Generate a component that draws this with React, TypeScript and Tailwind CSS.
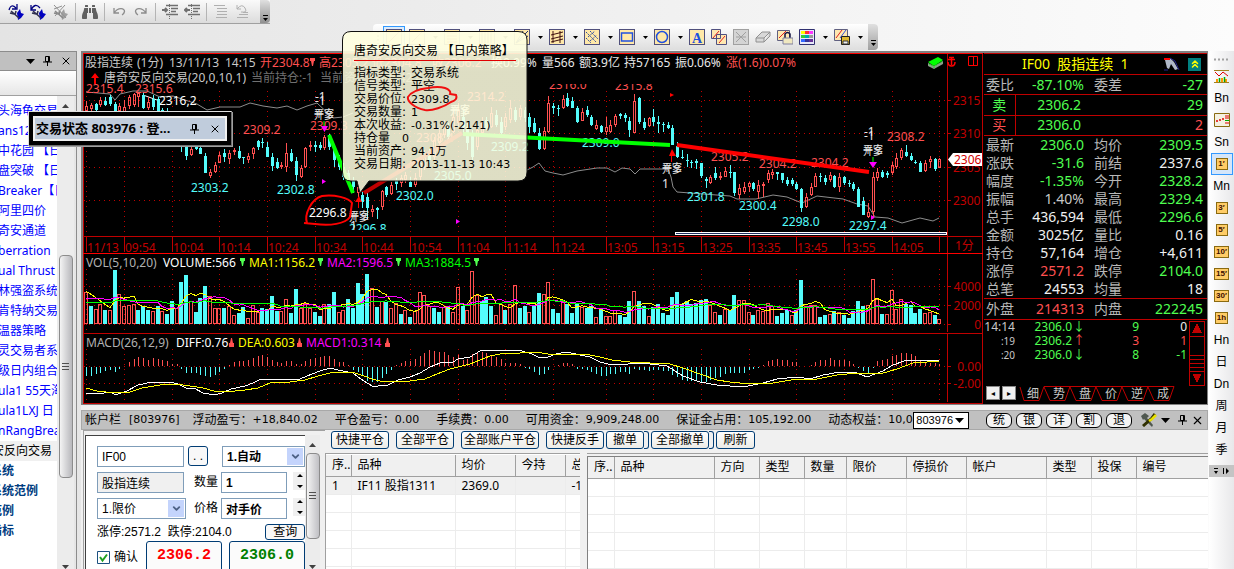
import React from "react";
import { FaBinoculars } from "react-icons/fa";
import { ChevronDown, ChevronsUp, X } from "lucide-react";

const UI = "font-['Noto_Sans','Noto_Sans_CJK_SC',sans-serif]";
const TAHOMA = "font-['DejaVu_Sans','Noto_Sans_CJK_SC',sans-serif]";
const SONG = "font-['Liberation_Sans','Noto_Sans_CJK_SC',sans-serif]";

const RED = "#ff5050";
const CYAN = "#54fcfc";
const DARK = "#c00000";

const barX = (i: number) => Math.round(86 + i * 4.767);

/* One entry per minute: direction, high, body top, body bottom, low (thirds of a pixel). */
const CANDLES = `r,303,318,333,333 r,310,315,328,335 c,308,312,330,335 r,290,300,316,320 c,290,303,315,318 c,284,292,312,318 c,305,311,333,340 r,310,318,333,340 r,300,321,335,340 r,284,290,317,328
r,278,283,316,320 r,275,278,290,322 c,276,286,324,328 r,290,305,325,330 c,284,296,320,330 c,290,298,335,340 c,325,330,345,350 c,325,332,370,380 c,355,365,395,405 c,380,390,415,425
c,400,410,440,455 c,425,440,467,480 r,435,448,466,468 c,425,440,447,450 c,440,445,462,463 c,460,467,519,519 r,508,515,527,535 r,485,495,517,520 r,455,465,490,490 c,448,460,470,485
r,450,460,478,492 r,445,450,455,465 c,438,452,475,477 c,470,472,475,492 r,460,467,480,490 r,442,445,463,476 c,420,424,440,450 c,415,425,430,443 c,425,440,470,470 c,460,470,498,512
c,475,485,503,506 r,485,495,499,508 r,430,460,500,515 c,448,460,482,485 c,470,482,525,542 r,495,505,530,535 r,440,445,500,503 r,424,435,438,452 c,422,434,440,455 c,425,436,443,450
r,405,412,445,450 c,402,405,440,450 c,440,450,480,502 c,465,480,500,510 c,490,500,530,540 c,510,520,545,555 c,530,540,560,580 r,550,562,580,590 c,575,585,605,625 c,575,590,625,657
r,615,628,636,650 c,620,625,630,658 r,570,574,620,630 c,558,562,585,590 r,545,555,583,586 c,535,540,553,570 r,525,535,550,560 r,515,525,540,550 c,530,545,560,562 r,520,535,555,560
r,480,490,530,540 r,450,460,500,510 c,440,455,480,490 r,410,420,470,480 r,385,400,430,445 r,360,375,405,415 c,370,380,410,420 r,330,350,395,400 r,310,330,370,380 c,330,350,380,400
c,370,380,430,450 c,390,400,470,480 r,380,390,440,450 r,350,365,400,410 c,350,360,385,390 r,320,340,380,385 c,330,345,375,380 c,350,365,400,405 r,340,350,380,390 r,300,325,360,370
c,320,330,360,365 r,315,325,350,360 c,320,330,355,365 c,340,350,380,400 c,355,370,395,400 c,385,400,447,450 r,380,393,447,450 r,288,310,395,400 c,310,318,325,343 c,316,323,327,348
r,285,296,325,328 c,278,293,318,322 c,290,303,323,325 c,318,325,365,370 r,325,337,362,364 c,318,330,345,350 c,345,350,375,378 r,360,375,388,390 c,375,377,395,398 r,350,380,395,405
r,360,375,395,398 r,342,348,375,380 c,338,343,349,358 c,340,345,355,365 c,350,362,390,412 r,282,302,398,398 c,290,293,365,372 c,355,367,385,390 r,350,355,378,382 c,328,352,365,378
c,348,365,372,398 c,365,372,375,395 c,367,375,383,388 c,375,383,435,435 c,425,438,470,475 c,450,470,475,478 c,463,480,483,500 c,480,486,490,503 c,478,484,490,508 c,488,490,528,535
c,530,538,542,565 r,525,530,548,552 c,502,518,535,540 r,515,527,533,540 r,502,512,530,532 c,495,515,520,533 c,515,517,578,587 r,552,565,585,597 r,545,560,575,582 r,545,549,560,575
c,545,548,567,572 r,540,555,575,597 r,545,553,557,590 r,510,520,540,550 r,507,515,525,538 c,515,517,522,540 c,518,520,540,548 c,530,540,553,557 c,535,540,553,558 c,545,553,567,570
c,563,566,625,637 r,580,590,620,625 r,550,560,585,588 r,520,527,560,562 c,520,527,530,545 c,525,535,545,555 r,515,525,540,545 c,525,527,562,565 r,520,530,560,577 c,528,532,550,555
c,540,550,553,562 c,545,553,567,572 c,560,568,620,622 c,592,603,645,645 r,610,637,650,655 r,517,530,637,650 r,503,517,533,543 c,510,515,530,535 c,513,520,524,533 r,485,495,520,525
r,460,475,500,508 r,445,450,475,480 c,435,457,467,470 c,458,468,480,483 c,480,485,490,493 c,483,490,515,517 r,480,490,513,515 r,468,478,487,505 c,475,478,507,512 r,475,478,503,505`
  .split(/\s+/)
  .map((s) => {
    const [k, ...v] = s.split(",");
    return { k, v: v.map((n) => Number(n) / 3) };
  });

const VOLUMES = `r187 c228 r238 r221 c240 r240 c120 r193 r229 r226 r222 c240 c228 c240 r243 c228 r243 c252 c213 r235 c156 c135 r213 c246 c204 c168 r199 r235 r235 c234
r228 r256 c249 c231 r265 r226 r247 c234 c237 c198 c243 r244 r208 c249 c177 r235 r219 r235 c247 c258 r223 c222 c186 r247 r241 c207 c234 c159 c192 c132
r175 c231 r214 c216 r235 r220 c252 r241 c261 r244 r187 r196 r229 c234 c246 r232 c231 r247 r172 c228 r241 r124 r196 c213 c201 c228 r256 r223 c240 r223
r166 c234 c228 r247 c228 c189 r193 r157 c237 c249 r214 c222 c249 c219 r232 c234 c228 r262 c237 r259 r259 r241 c255 c261 c213 r184 c213 c228 r259 c231
c222 c249 c255 c201 c186 c222 c213 c222 c219 c210 c207 r226 r247 c255 r238 c240 c195 r211 r211 r247 c255 r241 r244 r220 r228 c258 c249 c240 r256 c240
c150 r229 r226 r226 c261 c255 r253 c243 r247 c255 c264 c243 c213 c228 r226 r148 r208 c252 r253 r181 r238 r208 c222 c225 c249 c237 r250 r247 c255 r268`
  .split(/\s+/)
  .map((s) => ({ k: s[0], h: 282 - Number(s.slice(1)) }));

const MACD = [
  -26, -26, -22, -17, -13, -8, -16, -7, 0, 12, 21, 27, 25, 18, 23, 20, 19, 15, 7, 5, -7, -18, -19, -18, -24, -28, -29,
  -24, -15, -7, 4, 12, 16, 14, 17, 23, 30, 33, 27, 18, 13, 8, 15, 14, 6, 5, 14, 22, 24, 28, 31, 31, 22, 13, 13, 3, -9,
  -15, -27, -43, -46, -45, -32, -22, -10, 3, 9, 16, 16, 22, 31, 40, 47, 46, 42, 41, 32, 28, 33, 18, 22, 35, 42, 42, 40,
  32, 26, 21, 10, 9, 9, 5, -2, -6, -14, -25, -22, -8, 1, 4, 9, 9, 6, -5, -6, -8, -16, -21, -28, -28, -22, -20, -16,
  -14, -20, -6, -8, -10, -11, -9, -10, -11, -12, -23, -31, -38, -41, -41, -40, -48, -44, -38, -34, -31, -22, -18, -18,
  -17, -18, -9, -6, -3, 3, 15, 19, 22, 18, 18, 13, 12, 0, 0, 3, 13, 19, 18, 23, 17, 19, 17, 14, 7, -3, -12, -20, -3,
  14, 18, 22, 29, 34, 40, 40, 35, 31, 19, 12, 10, 9, 6,
];

const HISTORY = [...Array(10).fill(53), ...Array(5).fill(56), ...Array(4).fill(99)] as number[];

function average(period: number) {
  const all = [...HISTORY, ...VOLUMES.map((v) => v.h)];
  return VOLUMES.map((_, i) => {
    const end = i + HISTORY.length + 1;
    const sum = all.slice(end - period, end).reduce((a, b) => a + b, 0);
    return `${barX(i)},${(324 - sum / period / 3).toFixed(1)}`;
  }).join(" ");
}

const TIMES: [number, string][] = [
  [0, "11/13"], [8, "09:54"], [18, "10:04"], [28, "10:14"], [38, "10:24"], [48, "10:34"], [58, "10:44"], [68, "10:54"],
  [78, "11:04"], [88, "11:14"], [98, "11:24"], [109, "13:05"], [119, "13:15"], [129, "13:25"], [139, "13:35"],
  [149, "13:45"], [159, "13:55"], [169, "14:05"], [179, ""],
];

const MARKS: [number, number, string, string][] = [
  [86, 93, "2315.4", RED], [135, 93, "2315.6", RED], [159, 105, "2316,2", "#fff"], [243, 134, "2309.2", RED],
  [310, 130, "2309.3", RED], [467, 101, "2314.2", RED], [416, 142, "2308.4", RED], [549, 89, "2316.0", RED],
  [615, 90, "2315.8", RED], [711, 161, "2305.2", RED], [759, 168, "2304.2", RED], [811, 167, "2304.2", RED],
  [887, 141, "2308.2", RED], [191, 192, "2303.2", CYAN], [277, 194, "2302.8", CYAN], [396, 200, "2302.0", CYAN],
  [434, 180, "2305.0", CYAN], [491, 151, "2309.2", CYAN], [582, 147, "2309.0", CYAN], [687, 201, "2301.8", CYAN],
  [739, 210, "2300.4", CYAN], [782, 226, "2298.0", CYAN], [849, 230, "2297.4", CYAN], [349, 233, "2296.8", CYAN],
  [309, 217, "2296.8", "#fff"],
];

const HEADS: [number, string, string][] = [
  [85, "股指连续", "#c8c8c8"], [137, "(1分)", "#c8c8c8"], [169, "13/11/13", "#c8c8c8"], [225, "14:15", "#c8c8c8"],
  [260, "开2304.8", RED], [319, "高2305.2", RED], [372, "低2304.8", RED], [432, "收2306.2", RED],
  [491, "换0.99%", "#e8e8e8"], [542, "量566", "#e8e8e8"], [579, "额3.9亿", "#e8e8e8"], [624, "持57165", "#e8e8e8"],
  [675, "振0.06%", "#e8e8e8"], [726, "涨(1.6)0.07%", RED],
];

const DIFF =
  "86,393 97,394 111,392 115,395 127,391 138,385 152,382 170,382 178,384 186,388 194,388 203,393 214,395 222,393 231,389 245,386 253,383 261,379 275,379 290,379 300,379 312,374 320,371 330,368 338,370 353,373 358,377 364,381 372,386 378,386 388,385 398,380 410,377 420,373 430,367 440,363 453,362 458,359 470,357 480,351 485,350 500,350 515,350 522,351 532,354 540,358 548,357 556,354 567,352 580,355 590,357 600,362 608,364 628,364 636,363 650,364 667,366 683,376 700,382 717,385 743,387 763,383 777,379 797,377 810,379 823,375 840,372 857,373 867,377 883,371 893,365 907,360 939,360";
const DEA =
  "86,388 97,391 115,393 130,392 142,388 160,385 175,384 190,386 203,388 214,391 225,392 245,390 258,388 270,383 290,382 305,380 318,376 330,373 345,372 355,373 364,376 372,379 380,381 395,382 410,381 425,379 437,374 450,369 470,364 480,360 490,356 505,353 520,353 535,352 555,355 575,354 590,355 600,357 612,360 630,362 650,363 670,364 683,368 700,374 717,380 730,382 750,384 773,383 797,379 817,379 837,375 857,373 880,374 897,369 913,363 927,362 939,361";

function Stacked({ x, y }: { x: number; y: number }) {
  return (
    <g fill="#e8e8e8" fontSize="10">
      <text x={x} y={y}>平空</text>
      <text x={x} y={y + 2}>开多</text>
    </g>
  );
}

function Chart() {
  return (
    <svg viewBox="83 53 900 351" preserveAspectRatio="xMinYMin meet" className={`block h-[351px] min-w-0 flex-1 bg-black text-[12px] ${UI}`} role="img" aria-label="股指连续 1分">
      <clipPath id="labels"><rect x="83" y="84" width="864" height="146" /></clipPath>
      <g shapeRendering="crispEdges" stroke={DARK} fill="none">
        {TIMES.map(([i]) => (
          <path key={i} d={`M${barX(i)}.5 91V236M${barX(i)}.5 269V332M${barX(i)}.5 349V403`} strokeDasharray="1 4" />
        ))}
        {[100, 133, 167, 200, 286, 305, 324, 366, 383].map((y) => (
          <path key={y} d={`M84 ${y}.5H947`} strokeDasharray="1 4" />
        ))}
        {[100, 133, 167, 200, 286, 305, 324, 366, 383].map((y) => <path key={y} d={`M948 ${y}.5h3`} />)}
        {TIMES.map(([i]) => <path key={i} d={`M${barX(i)}.5 236V252`} />)}
        <path d="M83.5 404V53.5H983M83 236.5H983M83 333.5H983M83 403.5H983M947.5 54V332M947.5 334V402M982.5 53V404" />
        <path d="M83 253.5H983M83 53.5H983" stroke="#ff0000" />
      </g>

      {HEADS.map(([x, t, c]) => <text key={x} x={x} y="67" fill={c}>{t}</text>)}
      <path d="M310 58h5v3h-1l-1 5h-1l-1-5h-1z" fill={RED} />
      <path d="M95 73l4 5h-3v6h-2v-6h-3z" fill="#f00" />
      <text x="104" y="82" fill="#c8c8c8">唐奇安反向交易(20,0,10,1)</text>
      <text x="251" y="82" fill="#707070">当前持仓:-1</text>
      <text x="320" y="82" fill="#707070">当前资产:940542.4</text>

      <g fill="none" stroke="#8c8c8c">
        <path d="M86 92L110 94L115 100L120 94L133 91L147 91L160 97L173 96L185 100L197 104L207 110L220 107L240 107L250 103L263 106L277 108L287 106L297 110L307 106L317 103L333 118L343 117L353 113" />
        <path d="M527 170L533 167L539 163L545 171L553 173L563 175L577 171L597 168L607 168L615 172L622 168L630 169L635 174L640 169L668 169L671 177L673 187L677 192L730 196L737 199L756 199L773 195L787 197L802 203L817 196L843 199L857 204L868 206L875 217L888 218L902 223L920 218L933 221L939 218" />
      </g>
      <path d="M143 95L157 100" stroke="#fff" />

      <g shapeRendering="crispEdges">
        {CANDLES.map(({ k, v }, i) => {
          const [h, t, b, l] = v.map(Math.round);
          const x = barX(i);
          const height = Math.max(1, b - t);
          return k === "c" ? (
            <path key={i} d={`M${x} ${h}h1V${t}h1v${height}h-1V${l}h-1V${t + height}h-1V${t}h1z`} fill={CYAN} />
          ) : (
            <path key={i} d={`M${x}.5 ${h}V${t}M${x}.5 ${b}V${l}M${x - 1}.5 ${t}.5h2v${Math.max(1, height - 1)}h-2z`} fill="none" stroke={RED} />
          );
        })}
        {VOLUMES.map(({ k, h }, i) => {
          const x = barX(i) - 2;
          const top = 324 - Math.round(h / 3);
          return k === "c" ? (
            <rect key={i} x={x} y={top} width="4" height={324 - top} fill={CYAN} />
          ) : (
            <rect key={i} x={x + 0.5} y={top + 0.5} width="3" height={323 - top} fill="none" stroke={RED} />
          );
        })}
        {MACD.map((m, i) => {
          const h = Math.round(Math.abs(m) / 3);
          return h ? <rect key={i} x={barX(i)} y={m > 0 ? 366 - h : 367} width="1" height={h} fill={m > 0 ? RED : CYAN} /> : null;
        })}
        <g fill="none">
          <polyline points={average(5)} stroke="#ff0" />
          <polyline points={average(10)} stroke="#f0f" />
          <polyline points={average(20)} stroke="#0f0" />
          <polyline points={DIFF} stroke="#fff" />
          <polyline points={DEA} stroke="#ff0" />
        </g>
      </g>

      <g clipPath="url(#labels)">
        {MARKS.map(([x, y, t, c], i) => <text key={i} x={x} y={y} fill={c}>{t}</text>)}
      </g>
      <g fill="#e8e8e8">
        <text x="315" y="101">-1</text><text x="315" y="105">-1</text>
        <text x="864" y="136">-1</text><text x="864" y="140">-1</text>
        <text x="662" y="188">1</text><text x="350" y="230">1</text>
      </g>
      <Stacked x={314} y={117} />
      <Stacked x={450} y={113} />
      <Stacked x={349} y={219} />
      <Stacked x={863} y={153} />
      <Stacked x={662} y={171} />
      <g fill="none" strokeWidth="4">
        <path d="M329 135L353 193M463 134L670 145" stroke="#0f0" />
        <path d="M677 145L869 172" stroke="#f00" />
        <path d="M364 193L462 133" stroke="#c00000" />
      </g>
      <g fill="#f0f">
        <path d="M321 126h7l-3.500 6zM869 162h8l-4 6zM322 179l4 2.500l-4 2.500zM456 219l4 2.500l-4 2.500zM871 215l4 2.500l-4 2.500z" />
      </g>
      <path d="M355 202h7l-3 -6zM358 202h1v6h-1zM669 156h7l-4-7zM671 156h1v6h-1zM670 93l4 2l-4 2z" fill="#f00" />
      <path d="M324 121v5M873 157v5" stroke="#0f0" />
      <path d="M307 223C304 215 311 199 322 196C334 194 349 198 352 203L350 217C345 224 330 226 315 224L304 223" fill="none" stroke="#f00" strokeWidth="2" />
      <path d="M675 232h272v3H675z" fill="#fff" />
      <path d="M676 233.500h270" stroke="#203060" />

      <path d="M928 62L938 57L943 60L934 66z" fill="#0f0" />
      <path d="M928 63l6 3v3l-6-3zM934 66l9-5v3l-9 5z" fill="#8c9c8c" />
      <path d="M929 64l5 2.500 8-5M934 67v2" stroke="#0f0" strokeDasharray="1 1" fill="none" />
      <path d="M951.500 57v8M948 62q0 4 3.500 4t3.500-4M948 59.500h7M949 57.500h5" stroke="#f00" fill="none" strokeWidth="1.500" />
      <path d="M968.500 56.500h9v9h-9zM973.500 56v10" stroke="#f00" fill="none" />

      <g fill={DARK}>
        {TIMES.map(([i, t]) => <text key={i} x={barX(i) + 1} y="252">{t}</text>)}
        <text x="955" y="250">1分</text>
        <text x="953" y="105">2315</text><text x="953" y="138">2310</text>
        <text x="953" y="172">2305</text><text x="953" y="205">2300</text>
        <g textAnchor="end">
          <text x="981" y="291">4000</text><text x="981" y="310">2000</text><text x="981" y="329">0</text>
          <text x="981" y="371">0.00</text><text x="981" y="388">-2.00</text>
        </g>
      </g>
      <path d="M948 159.500l5-6.500h29v13h-29z" fill="#fff" />
      <text x="954" y="164" fill="#d00000">2306</text>

      <text x="86" y="267" fill="#b0b0b0">VOL(5,10,20)</text>
      <text x="163" y="267" fill="#fff">VOLUME:566</text>
      <text x="249" y="267" fill="#ff0">MA1:1156.2</text>
      <text x="327" y="267" fill="#f0f">MA2:1596.5</text>
      <text x="405" y="267" fill="#0f0">MA3:1884.5</text>
      <path d="M240 258h5v3h-1l-1 5h-1l-1-5h-1zM318 258h5v3h-1l-1 5h-1l-1-5h-1zM396 258h5v3h-1l-1 5h-1l-1-5h-1zM474 258h5v3h-1l-1 5h-1l-1-5h-1z" fill="#50ff50" />
      <text x="86" y="347" fill="#b0b0b0">MACD(26,12,9)</text>
      <text x="176" y="347" fill="#fff">DIFF:0.76</text>
      <text x="238" y="347" fill="#ff0">DEA:0.603</text>
      <text x="306" y="347" fill="#f0f">MACD1:0.314</text>
      <path d="M229 347h5v-4h-1l-1-5h-1l-1 5h-1zM297 347h5v-4h-1l-1-5h-1l-1 5h-1zM385 347h5v-4h-1l-1-5h-1l-1 5h-1z" fill={RED} />
    </svg>
  );
}

const G = "text-[#50ff50]";
const R = "text-[#ff5050]";
const W = "text-[#f0f0f0]";
const QUOTES: [string, string, string, string, string, string][] = [
  ["最新", "2306.0", G, "均价", "2309.5", G],
  ["涨跌", "-31.6", G, "前结", "2337.6", W],
  ["幅度", "-1.35%", G, "今开", "2328.2", G],
  ["振幅", "1.40%", "text-[#c8c8c8]", "最高", "2329.4", G],
  ["总手", "436,594", W, "最低", "2296.6", G],
  ["金额", "3025亿", W, "量比", "0.16", W],
  ["持仓", "57,164", W, "增仓", "+4,611", W],
  ["涨停", "2571.2", R, "跌停", "2104.0", G],
  ["总笔", "24553", W, "均量", "18", W],
];

function QuoteRow({ row, className }: { row: (typeof QUOTES)[number]; className: string }) {
  return (
    <tr className={className}>
      <th className="w-[32px] p-0 pl-0.5 text-left font-normal text-[#b8b8b8]">{row[0]}</th>
      <td className={`w-[68px] p-0 text-right ${row[2]}`}>{row[1]}</td>
      <th className="w-[40px] p-0 pl-2.5 text-left font-normal text-[#b8b8b8]">{row[3]}</th>
      <td className={`p-0 pr-1 text-right ${row[5]}`}>{row[4]}</td>
    </tr>
  );
}

function Quotes() {
  return (
    <section className={`flex w-[223px] shrink-0 flex-col border-t border-[#c00000] bg-black text-[14px] leading-[18px] whitespace-nowrap ${UI}`}>
      <header className="flex h-5 items-center justify-end gap-2 pr-1.5 text-[14px] text-[#ff0]">
        <span className="flex-1 pl-[38px]">IF00&nbsp; 股指连续&nbsp; 1</span>
        <svg width="16" height="14" viewBox="0 0 16 14"><path d="M1 3L6 1L10 5L14 12L11 13L7 7L5 12L3 11z" fill="#b0b8c8" /><path d="M0 1h6v2H0z" fill="#f00" /><path d="M6 1l5 3l4 9M0 13h4" fill="none" stroke="#22228c" /></svg>
        <button className="flex h-[13px] w-[13px] items-center justify-center bg-[#008080]" aria-label="收起"><ChevronsUp size={12} color="#ff0" strokeWidth={3} /></button>
      </header>
      <table className="w-full table-fixed border-collapse">
        <tbody><QuoteRow className="h-5 border-t border-b border-[#c00000]" row={["委比", "-87.10%", G, "委差", "-27", G]} /></tbody>
      </table>
      <table className="w-full table-fixed border-collapse">
        <tbody>
          <tr className="h-5 border-b border-[#c00000]">
            <th className={`w-[31px] border-r border-[#c00000] p-0 font-normal ${G}`}>卖</th>
            <td className={`w-[66px] p-0 text-right ${G}`}>2306.2</td>
            <td className={`p-0 pr-1 text-right ${G}`}>29</td>
          </tr>
          <tr className="h-5 border-b border-[#c00000]">
            <th className={`border-r border-[#c00000] p-0 font-normal ${R}`}>买</th>
            <td className={`p-0 text-right ${G}`}>2306.0</td>
            <td className={`p-0 pr-1 text-right ${R}`}>2</td>
          </tr>
        </tbody>
      </table>
      <table className="w-full table-fixed border-collapse">
        <tbody>
          {QUOTES.map((q) => <QuoteRow key={q[0]} row={q} className="h-[18px]" />)}
          <QuoteRow className="h-[21px] border-t border-b border-[#c00000]" row={["外盘", "214313", R, "内盘", "222245", G]} />
        </tbody>
      </table>
      <div className="flex h-[66px]">
        <table className="h-[42px] flex-1 table-fixed border-collapse text-[12px] leading-[14px]">
          <tbody>
            {[
              ["14:14", "2306.0", "↓", "9", "0", G, W],
              [":19", "2306.2", "↑", "3", "1", R, R],
              [":20", "2306.0", "↓", "8", "-1", G, G],
            ].map((t) => (
              <tr key={t[0]} className="h-[14px]">
                <td className={`w-[31px] p-0 text-right text-[#c8c8c8] ${t[0].length < 4 ? "text-[10px]" : ""}`}>{t[0]}</td>
                <td className={`w-[57px] p-0 text-right ${G}`}>{t[1]}</td>
                <td className={`w-[14px] p-0 text-center ${t[5]}`}>{t[2]}</td>
                <td className={`p-0 text-right ${t[5]}`}>{t[3]}</td>
                <td className={`w-[50px] p-0 pr-0.5 text-right ${t[6]}`}>{t[4]}</td>
              </tr>
            ))}
          </tbody>
        </table>
        <svg width="16" height="66" viewBox="0 0 16 65" className="mr-0.5 shrink-0" shapeRendering="crispEdges">
          <path d="M.5 .5h15v64h-15zM0 15.500h16M0 34.500h16M0 38.500h16M0 42.500h16M0 46.500h16M0 50.500h16" fill="none" stroke={DARK} />
          <path d="M8 3l5 9H3zM8 62l5-9H3z" fill={DARK} />
        </svg>
      </div>
      <div className="flex h-[18px] items-start text-[12px] leading-[15px] text-[#c8c8c8]">
        <div className="flex gap-0.5 pl-0.5">
          <button className="h-[14px] w-[14px] border border-[#888] bg-[#f0f0f0] text-[8px] leading-[10px] text-black">◂</button>
          <button className="h-[14px] w-[14px] border border-[#888] bg-[#f0f0f0] text-[8px] leading-[10px] text-black">▸</button>
        </div>
        {["细", "势", "盘", "价", "逆", "成"].map((t, i) => (
          <button key={t} className="relative h-[15px] w-[26px] pl-2">
            <svg className="absolute inset-0" width="30" height="15" viewBox="0 0 30 15"><path d={`M${i ? 2 : 4} 1L8 14.500H23L28 .5${i ? "H2" : ""}`} fill="none" stroke={DARK} /></svg>
            <span className="relative">{t}</span>
          </button>
        ))}
      </div>
    </section>
  );
}

function Pin() {
  return <svg width="9" height="10" viewBox="0 0 9 10"><path d="M2.500 .5h4v5h-4zM5.500 0v6M0 6h9M4.500 6v4" fill="none" stroke="#000" /></svg>;
}

const STRATEGIES = ["头海龟交易", "ans12头均线", "中花园 【日", "盘突破 【日内", "Breaker【日", "阿里四价", "奇安通道", "berration", "ual Thrust", "林强盗系统", "肯特纳交易", "温器策略", "灵交易者系统", "级日内组合", "ula1 55天海", "ula1LXJ 日", "nRangBreak"];

function Sidebar() {
  return (
    <aside className={`flex w-[77px] shrink-0 flex-col border-t border-r border-[#8c8c8c] text-[12px] ${UI}`}>
      <div className="flex h-[19px] shrink-0 items-center justify-end gap-2 border-b border-[#8c8c8c] bg-[#c0c0c0] pr-1">
        <svg width="9" height="5" viewBox="0 0 9 5"><path d="M0 0h9l-4.500 5z" /></svg>
        <Pin />
        <X size={12} strokeWidth={2} />
      </div>
      <div className="h-[25px] shrink-0 border-b border-[#a0a0a0] bg-gradient-to-b from-white to-[#e6e6e6]" />
      <div className="flex min-h-0 flex-1">
        <ul className="h-full w-[57px] overflow-hidden bg-white pt-[5px] leading-5 whitespace-nowrap text-[#0000ff]">
          {STRATEGIES.map((s) => <li key={s} className="-ml-0.5 h-5">{s}</li>)}
          <li className="h-5 bg-[#f0f0f0] text-black"><span className="-ml-2">安反向交易</span></li>
          {["系统", "系统范例", "范例", "指标"].map((s) => <li key={s} className="-ml-2.5 h-5 font-bold text-[#003c80]">{s}</li>)}
        </ul>
        <div className="flex w-[17px] flex-col items-center bg-[#ececec] py-2">
          <svg width="7" height="4" viewBox="0 0 7 4"><path d="M0 4h7L3.500 0z" fill="#404040" /></svg>
          <div className="mt-[147px] flex h-[223px] w-[14px] shrink-0 items-center justify-center rounded-sm border border-[#8c8c8c] bg-gradient-to-r from-[#f4f4f4] to-[#b8b8bc]">
            <svg width="7" height="8" viewBox="0 0 7 8"><path d="M0 .5h7M0 3.500h7M0 6.500h7" stroke="#505050" /></svg>
          </div>
          <svg className="mt-auto -mb-2" width="7" height="4" viewBox="0 0 7 4"><path d="M0 0h7L3.500 4z" fill="#404040" /></svg>
        </div>
      </div>
    </aside>
  );
}

function Lines({ dir, tone }: { dir: "in" | "out" | "none" | "undo"; tone: string }) {
  return (
    <svg width="16" height="15" viewBox="0 0 16 15" fill="none" stroke={tone}>
      {(dir === "in" || dir === "out") && (
        <>
          <path d="M4 1.500h12M9 4.500h7M9 7.500h5M4 10.500h12" strokeWidth="1.500" />
          <path d="M7.500 0v15" strokeDasharray="1 1" />
        </>
      )}
      {dir === "none" && <path d="M1 1.500h11M4 4.500h10M4 7.500h10M4 10.500h10M3 13.500h11" />}
      {dir === "undo" && <path d="M2 1v4h4M2 5q5-6 8-1t-4 4M8 8.500h5M4 10.500h9M2 13.500h11" />}
      {dir === "in" && <path d="M0 6h5M3 4l2 2-2 2" strokeWidth="2" />}
      {dir === "out" && <path d="M1 6h5M3 4L1 6l2 2" strokeWidth="2" />}
    </svg>
  );
}

function CurveArrow({ flip }: { flip?: boolean }) {
  return (
    <svg width="13" height="9" viewBox="0 0 13 9">
      <path d={flip ? "M12 1v5H7M12 6C8 0 1 1 1.500 4.500Q2 7 4 8" : "M1 1v5h5M1 6C5 0 12 1 11.500 4.500Q11 7 9 8"} fill="none" stroke="#8c8c8c" strokeWidth="1.300" />
    </svg>
  );
}

function FlagIcon({ off, back }: { off?: boolean; back?: boolean }) {
  const c = off ? "#a0a0a0" : "#0000c0";
  return (
    <svg width="17" height="16" viewBox="0 0 17 16">
      {!off && <path d={back ? "M1 1v5h5M1 6Q5-2 10 4" : "M1 6Q3-1 8 4M9 0v5H4"} fill="none" stroke="#000080" strokeWidth="1.300" />}
      <path d="M9 9l3-4 1 4 3 1-3 4-3 2z" fill={c} />
      <path d="M3 7l8 7M8 7l-1 4M2 9l4 1" stroke={off ? "#888" : "#303050"} strokeWidth="1.500" />
      {off && <path d="M2 1l12 13M13 1L3 12M2 5l8-3" stroke="#909090" />}
    </svg>
  );
}

function MainToolbar() {
  const sep = <i className="h-[18px] w-px bg-[#b4b4b4]" />;
  return (
    <div className="flex h-6 w-[270px] items-center gap-1.5 border-b border-[#a0a0a0] bg-gradient-to-b from-[#fafafa] to-[#dcdcdc]">
      <button className="ml-2" aria-label="前进"><FlagIcon /></button>
      <button aria-label="后退" className="-ml-px"><FlagIcon back /></button>
      <button aria-label="停止" className="-ml-px"><FlagIcon off /></button>
      {sep}
      <button aria-label="查找"><FaBinoculars size={16} color="#606060" /></button>
      {sep}
      <button aria-label="撤销" className="ml-0.5"><CurveArrow /></button>
      <button aria-label="重做" className="ml-0.5"><CurveArrow flip /></button>
      <i className="ml-0.5 h-[18px] w-px bg-[#b4b4b4]" />
      <button aria-label="缩进"><Lines dir="in" tone="#707070" /></button>
      <button aria-label="减少缩进"><Lines dir="out" tone="#707070" /></button>
      {sep}
      <button aria-label="注释"><Lines dir="none" tone="#b0b0b0" /></button>
      <button aria-label="取消注释"><Lines dir="undo" tone="#b0b0b0" /></button>
      <button aria-label="更多" className="ml-auto flex h-full w-2.5 items-end justify-center rounded-r bg-gradient-to-b from-[#e0e0e0] to-[#909090] pb-0.5"><svg width="5" height="6" viewBox="0 0 5 6"><path d="M0 .5h5" stroke="#000" /><path d="M0 3h5L2.500 6z" /></svg></button>
    </div>
  );
}

const ART: Record<string, React.ReactNode> = {
  line: <path d="M3 13L13 3" stroke="#c03030" />,
  rows: <path d="M3 4h10M3 7h10M3 10h10M3 13h10" stroke="#c03030" />,
  cols: <path d="M3 2v12M6 2v12M9 2v12M12 2v12" stroke="#404040" />,
  fan: <path d="M2 14L14 2M2 14L14 7M2 14L9 2" stroke="#203070" />,
  fork: <path d="M4 2v12M11 2v12M2 6l12-3M2 10l12-3M2 13l12-3" stroke="#401010" fill="none" />,
  hatch: <path d="M2 3l10 10M6 2l8 8M2 9l5 5M4 8l7-6M6 12l7-6" stroke="#3050a0" strokeDasharray="2 1" fill="none" />,
  rect: <rect x="2.500" y="4" width="11" height="8" stroke="#2050e0" strokeWidth="1.500" fill="none" />,
  circle: <circle cx="8" cy="8" r="5.500" stroke="#2050e0" strokeWidth="1.500" fill="none" />,
  text: <text x="8" y="13.500" textAnchor="middle" fontSize="14" fontWeight="bold" fill="#2050e0" fontFamily="Liberation Serif">A</text>,
};

function Tool({ art, gray }: { art: string; gray?: boolean }) {
  if (art === "copy")
    return <svg width="16" height="16" viewBox="0 0 16 16"><path d="M.5 .5h9v9h-9zM5.500 5.500h10v10h-10z" fill="#ffe8b0" stroke="#505080" /><path d="M2 9l6-7M8 14l6-7" stroke="#e02020" /></svg>;
  if (art === "eraser")
    return <svg width="16" height="16" viewBox="0 0 16 16"><path d="M1 9l6-6h8l-6 6zM1 9v4h8V9M9 13l6-6V3" fill="#d8d8d8" stroke="#909090" /></svg>;
  if (art === "lock")
    return <svg width="16" height="16" viewBox="0 0 16 16"><path d="M.5 1.500h12v10H.5z" fill="#ffe8b0" stroke="#606080" /><path d="M2 9l7-7" stroke="#e02020" /><path d="M8 9V5q2.500-3 5 0v4" fill="none" stroke="#101040" strokeWidth="1.500" /><path d="M6 9h10v6H6z" fill="#f0e8c0" stroke="#8080a0" /></svg>;
  if (art === "save")
    return <svg width="16" height="16" viewBox="0 0 16 16"><path d="M.5 .5h13v11H.5z" fill="#ffe8b0" stroke="#606080" /><path d="M2 9l6-8" stroke="#e02020" /><path d="M6 9l6-8" stroke="#3050e0" /><path d="M7.500 7.500h8v8h-8z" fill="#e0b830" stroke="#202020" /><path d="M9 12h5v3H9z" fill="#eee" stroke="#333" /></svg>;
  if (art === "palette")
    return (
      <svg width="16" height="16" viewBox="0 0 16 16"><path d="M.5 .5h15v15H.5z" fill="#e8e8f8" stroke="#303070" />
        {["#ff0", "#f33", "#f3f", "#3c3", "#0aa", "#999", "#36f", "#339", "#639"].map((c, i) => <rect key={c} x={2 + (i % 3) * 4} y={2 + Math.floor(i / 3) * 4} width="4" height="3" fill={c} />)}
      </svg>
    );
  return (
    <svg width="16" height="16" viewBox="0 0 16 16">
      <rect x=".5" y=".5" width="15" height="15" fill={gray ? "#d4d4d4" : "#ffe8a8"} stroke={gray ? "#a0a0a0" : "#50507c"} />
      {gray ? <path d="M3 3l10 10M13 3L3 13M3 8h10" stroke="#a0a0a0" /> : ART[art]}
    </svg>
  );
}

function DrawingToolbar() {
  const tools: [string, boolean][] = [["line", true], ["rows", true], ["cols", true], ["fan", true], ["fork", true], ["hatch", true], ["rect", true], ["circle", true], ["text", false], ["copy", false], ["none", false], ["eraser", false], ["lock", false], ["palette", true], ["save", true]];
  return (
    <div className="ml-[373px] flex h-[26px] w-[505px] items-center rounded bg-gradient-to-b from-white to-[#dedede]">
      <svg className="ml-1" width="2" height="14" viewBox="0 0 2 14"><path d="M1 1v13" stroke="#888" strokeWidth="2" strokeDasharray="2 2" /></svg>
      <span className="ml-1 flex h-[22px] w-[22px] items-center justify-center border border-[#3399ff] bg-[#dcebfa]"><Tool art="line" /></span>
      <div className="ml-1 flex items-center gap-1.5">
        {tools.map(([t, menu], i) => (
          <button key={i} className="flex items-center" aria-label={t}>
            <Tool art={t} gray={t === "none"} />
            {menu && <svg className="ml-2" width="5" height="3" viewBox="0 0 5 3"><path d="M0 0h5L2.500 3z" /></svg>}
          </button>
        ))}
      </div>
      <button aria-label="更多" className="ml-auto flex h-full w-2.5 items-end justify-center rounded-r bg-gradient-to-b from-[#e0e0e0] to-[#a0a0a0] pb-1"><svg width="5" height="6" viewBox="0 0 5 6"><path d="M0 .5h5" stroke="#000" /><path d="M0 3h5L2.500 6z" /></svg></button>
    </div>
  );
}

function PeriodBar() {
  const items = ["chart", "Bn", "curve", "Sn", "1′", "Mn", "3′", "5′", "10′", "15′", "30′", "1h", "Hn", "日", "Dn", "周", "月", "季"];
  return (
    <nav className={`ml-px flex w-[25px] shrink-0 flex-col items-center bg-gradient-to-r from-white to-[#e8e8ea] text-[12px] ${SONG}`}>
      <svg className="mt-[7px] mb-1 shrink-0" width="15" height="3" viewBox="0 0 15 3"><path d="M0 1.500h15" stroke="#a0a0a0" strokeWidth="2" strokeDasharray="2 2" /></svg>
      {items.map((t) => (
        <button key={t} className={`flex h-[22px] w-[22px] shrink-0 items-center justify-center ${t === "1′" ? "border border-[#3399ff] bg-[#d4e6fa]" : ""}`}>
          {t === "chart" ? (
            <svg width="15" height="13" viewBox="0 0 15 13"><path d="M0 .5h15M0 12.500h15" stroke="#a08020" /><path d="M1 2l4 4 4-4 5 4" fill="none" stroke="#e00000" /><path d="M3 12V9M8 12V8M12 12V9" stroke="#f90" strokeWidth="2" /><path d="M5.500 12V8M10.500 12V7" stroke="#0a0" strokeWidth="1.500" /></svg>
          ) : t === "curve" ? (
            <svg width="16" height="14" viewBox="0 0 16 14"><path d="M.5 .5h15v13H.5z" fill="#f4f0e0" stroke="#8a6a10" /><path d="M2 8h2M5 7h2M8 6h2" stroke="#e00000" strokeWidth="1.500" /><path d="M11 3h4M11 5h4M11 10h4" stroke="#e00000" /><path d="M11 7.500h4" stroke="#0a0" /></svg>
          ) : /^\d/.test(t) ? (
            <span className="flex h-3 min-w-3 items-center justify-center border border-[#8a6a10] bg-[#ffcc66] px-px text-[8px] leading-none font-bold text-[#401000]">{t}</span>
          ) : t}
        </button>
      ))}
      <div className="mt-1 flex h-3 w-full shrink-0 items-center justify-center bg-[#c4c4c4]"><svg width="16" height="7" viewBox="0 0 16 7"><path d="M0 0h4v1H0zM0 3h4L2 6zM9 0h1v6h-1zM12 0l3 3-3 3z" /></svg></div>
    </nav>
  );
}

function AccountBar() {
  const pairs = [["浮动盈亏：", "+18,840.02"], ["平仓盈亏：", "0.00"], ["手续费：", "0.00"], ["可用资金：", "9,909,248.00"], ["保证金占用：", "105,192.00"]];
  return (
    <div className={`flex h-5 shrink-0 items-center border border-[#a8a8a8] bg-[#c0c0c0] pr-[3px] pl-[3px] text-[12px] whitespace-nowrap ${TAHOMA}`}>
      <span>帐户栏</span>
      <span className="mr-[13px] ml-2 text-[11px]">[803976]</span>
      {pairs.map(([k, v]) => <span key={k} className="mr-[17px] flex items-center">{k}<b className="text-[11px] font-normal">{v}</b></span>)}
      <span className="flex items-center">动态权益：<b className="w-[25px] overflow-hidden text-[11px] font-normal">10,014</b></span>
      <label className={`relative flex h-[17px] w-14 items-center border border-black bg-white ${SONG}`}>
        <select aria-label="帐户" className="w-full appearance-none pl-0.5 text-[11px] leading-4 outline-none"><option>803976</option></select>
        <svg className="pointer-events-none absolute right-1" width="9" height="5" viewBox="0 0 9 5"><path d="M0 0h9l-4.500 5z" /></svg>
      </label>
      <div className="ml-auto flex items-center gap-1">
        {["统", "银", "详", "割", "退"].map((t) => <button key={t} className="h-[15px] w-[26px] rounded-[6px] border border-black bg-[#f4f4f4] text-[12px] leading-[13px]">{t}</button>)}
        <button className="ml-1 flex" aria-label="设置"><svg width="17" height="14" viewBox="0 0 17 14"><path d="M1 3l4-3 4 3-2 2 6 7-1 2-8-8-1 1z" fill="#505850" /><path d="M15 1l-3 4-9 8" stroke="#303000" strokeWidth="3" fill="none" /><path d="M16 2l-4 4-3 2" stroke="#e8e000" strokeWidth="2.500" fill="none" /></svg></button>
        <svg width="9" height="5" viewBox="0 0 9 5"><path d="M0 0h9l-4.500 5z" /></svg>
        <span className="ml-1"><Pin /></span>
        <X size={13} />
      </div>
    </div>
  );
}

function Combo({ value, className, label }: { value: string; className: string; label: string }) {
  return (
    <span className={`relative flex h-[21px] shrink-0 items-center border border-[#7f9db9] bg-white ${className}`}>
      <select aria-label={label} className="w-full appearance-none pl-1 outline-none"><option>{value}</option></select>
      <i className="pointer-events-none absolute right-px flex h-[17px] w-4 items-center justify-center bg-[#c4d4fc]"><ChevronDown size={11} strokeWidth={4} color="#4d6185" /></i>
    </span>
  );
}

function Spinner() {
  return <span className="ml-1.5 flex h-[18px] w-3 shrink-0 items-center bg-[#f0f0f0] pl-1"><svg width="6" height="14" viewBox="0 0 6 14"><path d="M0 3h6L3 0zM0 11h6L3 14z" /></svg></span>;
}

function OrderForm() {
  const field = "h-[21px] border border-[#7f9db9] px-1 outline-none";
  return (
    <div className={`flex w-[242px] shrink-0 border-t border-l border-[#a0a0a0] pt-1 pl-px text-[12px] whitespace-nowrap ${SONG}`}>
      <form className="w-[220px] overflow-hidden border-t border-l border-[#404040] bg-white pt-2.5 pl-[11px]">
        <div className="flex h-[26px]">
          <input aria-label="合约" className={`${field} w-[87px]`} defaultValue="IF00" />
          <button type="button" className="ml-1 h-5 w-[22px] rounded-[3px] border border-[#003c74] bg-[#f8f8f8] leading-4">. .</button>
          <Combo label="开平" className="ml-3.5 w-[83px] font-bold" value="1.自动" />
        </div>
        <div className="flex h-[26px] items-start">
          <input aria-label="名称" readOnly className={`${field} w-[87px] bg-[#f0f0f0]`} defaultValue="股指连续" />
          <label htmlFor="qty" className="ml-2.5 w-[29px] leading-[21px]">数量</label>
          <input id="qty" className={`${field} w-[66px] font-bold`} defaultValue="1" />
          <Spinner />
        </div>
        <div className="flex h-6 items-start">
          <Combo label="价格方式" className="w-[89px]" value="1.限价" />
          <label htmlFor="price" className="ml-2 w-[29px] leading-[21px]">价格</label>
          <input id="price" className={`${field} w-[66px] font-bold`} defaultValue="对手价" />
          <Spinner />
        </div>
        <div className="flex h-[19px] items-center">
          <span className="w-[170px]">涨停:2571.2&nbsp; 跌停:2104.0</span>
          <button type="button" className="h-4 w-10 rounded-[3px] border border-[#003c74] bg-[#f8f8f8] leading-[14px]">查询</button>
        </div>
        <div className="flex">
          <div className="w-[50px] pt-1.5">
            <label className="flex h-5 items-center gap-1">
              <input type="checkbox" defaultChecked className="peer sr-only" />
              <svg width="13" height="13" viewBox="0 0 13 13"><path d="M.5 .5h12v12H.5z" fill="#fff" stroke="#1c5180" /><path d="M3 6l2.500 3.500L10 3.500" fill="none" stroke="#21a121" strokeWidth="2" /></svg>
              确认
            </label>
            <label className="flex h-5 items-center gap-1">
              <input type="checkbox" className="sr-only" />
              <svg width="13" height="13" viewBox="0 0 13 13"><path d="M.5 .5h12v12H.5z" fill="#fff" stroke="#1c5180" /></svg>
              很停
            </label>
          </div>
          <button type="button" className="h-[34px] w-[76px] shrink-0 rounded-[3px] border border-[#003c74] bg-[#fbfbfb] pb-1 font-['Liberation_Mono',monospace] text-[15px] font-bold text-[#ff0000]">2306.2</button>
          <button type="button" className="ml-[7px] h-[34px] w-[76px] shrink-0 rounded-[3px] border border-[#003c74] bg-[#fbfbfb] pb-1 font-['Liberation_Mono',monospace] text-[15px] font-bold text-[#008000]">2306.0</button>
        </div>
      </form>
      <div className="flex w-[15px] flex-col items-center bg-[#ececec] pt-2">
        <svg className="shrink-0" width="7" height="4" viewBox="0 0 7 4"><path d="M0 4h7L3.500 0z" fill="#404040" /></svg>
        <div className="mt-1.5 flex h-[86px] w-[14px] shrink-0 items-center justify-center rounded-sm border border-[#8c8c8c] bg-gradient-to-r from-[#f4f4f4] to-[#c0c0c4]">
          <svg width="7" height="8" viewBox="0 0 7 8"><path d="M0 .5h7M0 3.500h7M0 6.500h7" stroke="#505050" /></svg>
        </div>
        <svg className="mt-auto shrink-0" width="7" height="4" viewBox="0 0 7 4"><path d="M0 0h7L3.500 4z" fill="#404040" /></svg>
      </div>
    </div>
  );
}

function Grid({ cols, first, headH }: { cols: [string, string][]; first?: string[]; headH: string }) {
  const rows = [0, 1, 2, 3, 4, 5];
  return (
    <table className="w-full table-fixed border-collapse whitespace-nowrap">
      <thead>
        <tr className={`border-b border-[#a0a0a0] bg-[#f0f0f0] ${headH}`}>
          {cols.map(([name, w], i) => <th key={i} className={`${w} overflow-hidden border-r border-[#a0a0a0] p-0 pl-1.5 text-left font-normal last:border-r-0`}>{name}</th>)}
        </tr>
      </thead>
      <tbody>
        {rows.map((r) => (
          <tr key={r} className={`h-[18px] leading-[17px] border-b border-[#ececec] ${first && r === 0 ? "bg-[#f0f0f0]" : ""}`}>
            {cols.map((_, i) => <td key={i} className="overflow-hidden border-r border-[#ececec] p-0 pl-1.5 last:border-r-0">{first && r === 0 ? first[i] : ""}</td>)}
          </tr>
        ))}
      </tbody>
    </table>
  );
}

function OrderArea() {
  const btn = "h-[18px] rounded-[3px] border border-[#003c74] bg-gradient-to-b from-white to-[#ecebe6] px-1 leading-4";
  return (
    <div className={`flex min-w-0 flex-1 flex-col text-[12px] ${UI}`}>
      <div className={`flex h-[23px] shrink-0 items-start pt-px pl-1.5 whitespace-nowrap ${SONG}`}>
        <button className={`${btn} mr-[7px]`}>快捷平仓</button>
        <button className={`${btn} mr-[7px]`}>全部平仓</button>
        <button className={`${btn} mr-[7px] px-[2px]`}>全部账户平仓</button>
        <button className={`${btn} mr-0.5`}>快捷反手</button>
        <button className={`${btn} w-[38px]`}>撤单</button>
        <i className="mr-0.5 h-[18px] w-[5px] rounded-r-[3px] border-y border-r border-[#003c74]" />
        <button className={btn}>全部撤单</button>
        <i className="mr-0.5 h-[18px] w-[5px] rounded-r-[3px] border-y border-r border-[#003c74]" />
        <button className={`${btn} w-[39px]`}>刷新</button>
      </div>
      <div className="flex min-h-0 flex-1">
        <div className="w-[255px] shrink-0 overflow-hidden border-t border-l border-[#a0a0a0] bg-white pt-px">
          <Grid headH="h-[21px]" cols={[["序..", "w-[25px]"], ["品种", "w-[104px]"], ["均价", "w-[60px]"], ["今持", "w-[50px]"], ["总", ""]]} first={["1", "IF11 股指1311", "2369.0", "", "-1"]} />
        </div>
        <div className="ml-[7px] min-w-0 flex-1 border-t border-[#a0a0a0] pt-0.5">
          <div className="h-full overflow-hidden border-t border-l border-[#808080] bg-white">
            <Grid headH="h-[21px]" cols={[["序..", "w-[26px]"], ["品种", "w-[100px]"], ["方向", "w-[45px]"], ["类型", "w-[45px]"], ["数量", "w-[42px]"], ["限价", "w-[60px]"], ["停损价", "w-[60px]"], ["帐户", "w-[80px]"], ["类型", "w-[45px]"], ["投保", "w-[45px]"], ["编号", ""]]} />
          </div>
        </div>
      </div>
    </div>
  );
}

function SignalTip() {
  const rows = [["指标类型:", "交易系统"], ["信号类型:", "平空"], ["交易价位:", "2309.8"], ["交易数量:", "1"], ["本次收益:", "-0.31%(-2141)"], ["持仓量", "0"], ["当前资产:", "94.1万"], ["交易日期:", "2013-11-13 10:43"]];
  return (
    <div role="tooltip" className={`absolute top-[31px] left-[342px] w-[186px] text-[12px] leading-[13px] whitespace-nowrap text-black ${TAHOMA}`}>
      <svg className="absolute inset-0" width="186" height="164" viewBox="0 0 186 164">
        <defs><linearGradient id="tip" x1="0" y1="0" x2="0" y2="1"><stop offset="0" stopColor="#ffffe1" stopOpacity=".96" /><stop offset=".25" stopColor="#ffffe1" stopOpacity=".87" /><stop offset="1" stopColor="#ffffe1" stopOpacity=".87" /></linearGradient></defs>
        <path d="M9 .5H176Q185 .5 185 9V141Q185 150 176 150H27L18 162L15 150H9Q.5 150 .5 141V9Q.5 .5 9 .5z" fill="url(#tip)" stroke="#101010" />
      </svg>
      <div className="relative px-3 pt-3.5">
        <p className="border-b border-[#e00000] pb-0.5">唐奇安反向交易 【日内策略】</p>
        <dl className="mt-1.5">
          {rows.map(([k, v]) => (
            <div key={k} className="flex h-[13px]"><dt className={k === "持仓量" ? "w-12" : "w-[57px]"}>{k}</dt><dd className={/[交平]/.test(v) ? "" : "text-[11px]"}>{v}</dd></div>
          ))}
        </dl>
      </div>
      <svg className="absolute top-[54px] left-[64px]" width="52" height="28" viewBox="0 0 52 28"><path d="M22 3C36 0 46 4 44 9L50 10Q52 15 45 17C38 22 26 26 19 25C8 23 1 16 2 12Q6 5 22 3z" fill="none" stroke="#f01010" strokeWidth="2" /></svg>
    </div>
  );
}

export default function App() {
  return (
    <div className="relative flex h-screen flex-col overflow-hidden bg-gradient-to-r from-[#e4e4e4] to-[#fcfcfc] text-black">
      <header className="flex h-[51px] shrink-0 flex-col">
        <MainToolbar />
        <DrawingToolbar />
      </header>
      <div className="flex min-h-0 flex-1">
        <Sidebar />
        <main className="ml-1 flex min-w-0 flex-1 flex-col">
          <div className="flex shrink-0 border-t-2 border-r border-b border-l-2 border-[#808080] bg-black">
            <Chart />
            <Quotes />
          </div>
          <div className="flex min-h-0 flex-1 flex-col bg-[#f0f0f0] pt-[5px]">
            <AccountBar />
            <div className="flex min-h-0 flex-1 pl-0.5">
              <OrderForm />
              <OrderArea />
            </div>
          </div>
        </main>
        <PeriodBar />
      </div>

      <div className="absolute top-[111px] left-7 flex h-[35px] w-[204px] border border-[#e0e0e0] border-r-[#707070] border-b-[#707070] bg-black p-1 shadow-[1px_1px_0_#a0a0a0]">
        <div className={`flex flex-1 items-center border-2 border-[#f0f0f0] bg-[#c0ccdc] pr-1 pl-px text-[13px] font-bold whitespace-nowrap ${UI}`}>
          <span className="flex-1">交易状态 803976 : 登...</span>
          <Pin />
          <X className="ml-2.5" size={12} />
        </div>
      </div>
      <SignalTip />
    </div>
  );
}
